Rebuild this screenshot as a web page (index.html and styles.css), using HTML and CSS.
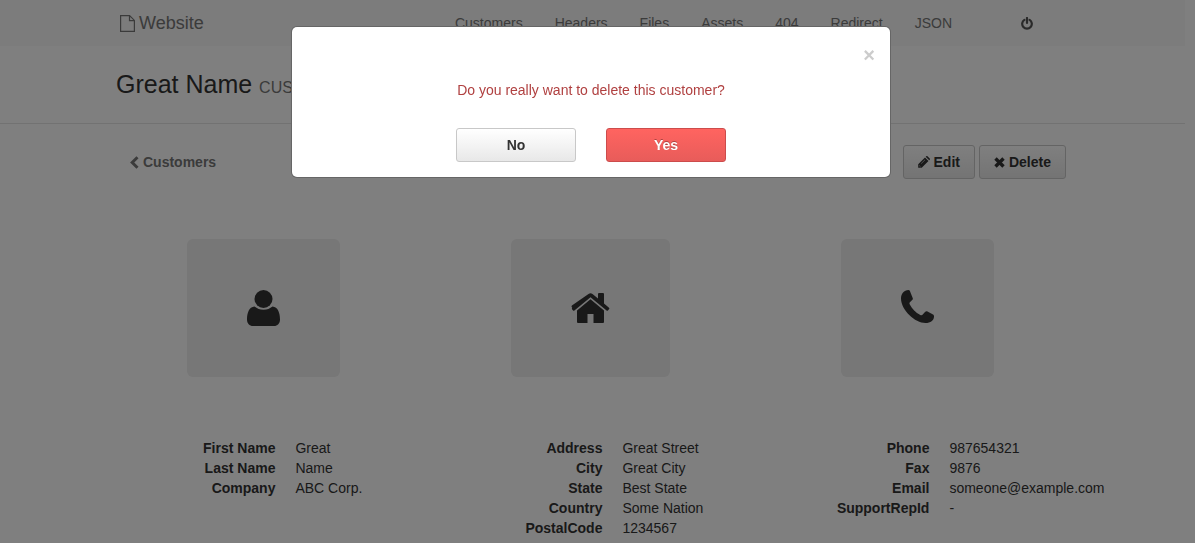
FILE: index.html
```html
<!DOCTYPE html>
<html lang="en">
<head>
<meta charset="utf-8">
<title>Great Name - Customer</title>
<link rel="stylesheet" href="styles.css">
</head>
<body>
<svg class="sprite" aria-hidden="true">
  <symbol id="file" viewBox="0 0 15 17"><path d="M.6.6h9l4.800 4.800v11H.6zM9.500.6v5h5" fill="none" stroke="currentColor" stroke-width="1.200"/></symbol>
  <symbol id="power" viewBox="0 0 12 13"><path d="M3.400 2.800a4.800 4.800 0 1 0 5.200 0" fill="none" stroke="currentColor" stroke-width="2.200" stroke-linecap="round"/><path d="M6 1v5" stroke="currentColor" stroke-width="2.200" stroke-linecap="round"/></symbol>
  <symbol id="chevron" viewBox="0 0 9 13"><path d="M7.500 1.200 2.200 6.500l5.300 5.300" fill="none" stroke="currentColor" stroke-width="3"/></symbol>
  <symbol id="pencil" viewBox="0 0 12 12"><path d="M7 1.500 10.500 5 3.700 11.800H.2V8.300zM7.700.8l.5-.5q.7-.6 1.300 0l2.200 2.200q.6.600 0 1.300l-.5.5z" fill="currentColor"/><path d="M1.200 9.500 2.500 10.800M3.200 7.600 7 3.800" stroke="#e8e8e8" stroke-width=".6"/></symbol>
  <symbol id="cross" viewBox="0 0 11 11"><path d="m1.500 1.500 8 8m0-8-8 8" stroke="currentColor" stroke-width="3.400"/></symbol>
  <symbol id="user" viewBox="0 0 33 36"><circle cx="16.500" cy="9" r="9" fill="currentColor"/><path d="M7.500 16.500C2 17 0 23 0 29.500 0 33.500 2.500 36 6 36h21c3.500 0 6-2.500 6-6.500 0-6.500-2-12.500-7.500-13-2.500 2-5.500 3.300-9 3.300s-6.500-1.300-9-3.300z" fill="currentColor"/></symbol>
  <symbol id="home" viewBox="0 0 39 36"><path d="M6 20.500 19.500 9.300 33 20.500V32q0 1-1 1h-9.500v-9h-6v9H7q-1 0-1-1z" fill="currentColor"/><path d="M1.200 17.800.7 17q-.5-.8.2-1.500L17.500 4q2-1.600 4 0l5.500 4.500V4q0-1 1-1h4q1 0 1 1v9.500l5 4.200q.7.600.2 1.200l-1.300 1.500q-.6.600-1.300.100L19.500 7.300 3.400 20.500q-.7.500-1.300-.1L.8 18.900z" fill="currentColor"/></symbol>
  <symbol id="phone" viewBox="0 0 33 36"><path d="M7.500 0C3 0 0 4 0 8.500 0 20 14 33 24.500 33c5 0 8.500-2.500 8.500-6.500 0-1-.3-1.500-1-1.900l-5.500-3c-1-.5-1.700-.3-2.500.5l-2.500 2.700c-.6.600-1.300.6-2.200.1-4.800-2.600-8-6-10.500-10.500-.5-.9-.5-1.500.1-2.100l2.300-2.200c.8-.8.9-1.400.4-2.400L8.900 1.100C8.600.4 8.200 0 7.500 0z" fill="currentColor"/></symbol>
</svg>
<div class="page">
  <header class="navbar">
    <a class="brand" href="#"><svg class="icon-file"><use href="#file"/></svg>Website</a>
    <nav class="menu">
      <a href="#">Customers</a><a href="#">Headers</a><a href="#">Files</a><a href="#">Assets</a><a href="#">404</a><a href="#">Redirect</a><a href="#">JSON</a>
    </nav>
    <a class="logout" href="#" aria-label="Log out"><svg class="icon-power"><use href="#power"/></svg></a>
  </header>
  <div class="heading"><h1>Great Name <small>CUSTOMER</small></h1></div>
  <main>
    <div class="toolbar">
      <a class="back" href="#"><svg class="icon-chevron"><use href="#chevron"/></svg>Customers</a>
      <div class="actions">
        <button class="btn" type="button"><svg class="icon-small"><use href="#pencil"/></svg>Edit</button>
        <button class="btn" type="button"><svg class="icon-small icon-cross"><use href="#cross"/></svg>Delete</button>
      </div>
    </div>
    <div class="details">
      <section>
        <div class="tile"><svg class="icon-large"><use href="#user"/></svg></div>
        <dl><dt>First Name</dt><dd>Great</dd><dt>Last Name</dt><dd>Name</dd><dt>Company</dt><dd>ABC Corp.</dd></dl>
      </section>
      <section>
        <div class="tile"><svg class="icon-large icon-wide"><use href="#home"/></svg></div>
        <dl><dt>Address</dt><dd>Great Street</dd><dt>City</dt><dd>Great City</dd><dt>State</dt><dd>Best State</dd><dt>Country</dt><dd>Some Nation</dd><dt>PostalCode</dt><dd>1234567</dd></dl>
      </section>
      <section>
        <div class="tile"><svg class="icon-large"><use href="#phone"/></svg></div>
        <dl><dt>Phone</dt><dd>987654321</dd><dt>Fax</dt><dd>9876</dd><dt>Email</dt><dd>someone@example.com</dd><dt>SupportRepId</dt><dd>-</dd></dl>
      </section>
    </div>
  </main>
</div>
<div class="overlay">
  <div class="modal" role="dialog" aria-modal="true" aria-labelledby="question">
    <button class="close" type="button" aria-label="Close">×</button>
    <p id="question">Do you really want to delete this customer?</p>
    <div class="choices">
      <button class="btn" type="button">No</button>
      <button class="btn danger" type="button">Yes</button>
    </div>
  </div>
</div>
</body>
</html>
```
FILE: styles.css
```css
* { box-sizing: border-box; }
body {
  margin: 0;
  background: #fff;
  color: #333;
  font: 14px/20px "Liberation Sans", Arial, sans-serif;
}
svg { display: block; flex: none; }
a { color: #777; text-decoration: none; }
.sprite { display: none; }
.page { margin-right: 10px; }
.navbar {
  display: flex;
  align-items: center;
  height: 46px;
  padding: 0 152px 0 120px;
  background: #f8f8f8;
}
.brand { display: flex; align-items: center; gap: 4px; font-size: 18px; }
.icon-file { width: 15px; height: 17px; }
.menu { display: flex; gap: 32px; margin-left: auto; }
.logout { margin-left: 69px; color: #555; }
.icon-power { width: 12px; height: 13px; }
.heading { padding: 22px 116px; border-bottom: 1px solid #e5e5e5; }
h1 { margin: 0; font-size: 25px; line-height: 33px; font-weight: normal; }
h1 small { font-size: 16px; line-height: 20px; color: #777; }
.toolbar {
  display: flex;
  justify-content: space-between;
  align-items: center;
  padding: 21px 119px 60px 130px;
}
.back { display: flex; align-items: center; gap: 4px; font-weight: bold; }
.icon-chevron { width: 9px; height: 13px; }
.actions { display: flex; gap: 4px; }
.btn {
  display: flex;
  align-items: center;
  justify-content: center;
  gap: 4px;
  height: 34px;
  padding: 0 14px;
  border: 1px solid #c8c8c8;
  border-radius: 3px;
  background: linear-gradient(#fff, #e8e8e8);
  color: #333;
  font: bold 14px/20px "Liberation Sans", Arial, sans-serif;
}
.icon-small { width: 12px; height: 12px; }
.icon-cross { width: 11px; height: 11px; }
.details {
  display: grid;
  grid-template-columns: repeat(3, minmax(0, 1fr));
  padding: 0 104px 0 100px;
}
.tile {
  width: fit-content;
  margin: 0 auto 61px;
  padding: 51px 60px;
  border-radius: 6px;
  background: #eee;
}
.icon-large { width: 33px; height: 36px; }
.icon-wide { width: 39px; }
dl {
  display: grid;
  grid-template-columns: minmax(0, 4fr) minmax(0, 3fr);
  column-gap: 20px;
  margin: 0;
  white-space: nowrap;
}
dt { font-weight: bold; text-align: right; }
dd { margin: 0; }
.overlay {
  position: fixed;
  inset: 0;
  display: flex;
  justify-content: center;
  align-items: flex-start;
  padding: 27px 13px 0 0;
  background: rgba(0, 0, 0, .5);
}
.modal {
  position: relative;
  width: 598px;
  max-width: 90%;
  padding: 53px 20px 15px;
  border-radius: 5px;
  background: #fff;
  box-shadow: 0 0 0 1px #666;
  color: #b04040;
  text-align: center;
}
.close {
  position: absolute;
  top: 18px;
  right: 11px;
  padding: 0 4px;
  border: 0;
  background: none;
  color: #ccc;
  font: bold 20px/20px "Liberation Sans", Arial, sans-serif;
}
.modal p { margin: 0 0 28px; }
.choices { display: flex; justify-content: center; gap: 30px; }
.choices .btn { width: 120px; }
.danger {
  border-color: #cc4c4c;
  background: linear-gradient(#ff6460, #e85c5a);
  color: #fff;
  text-shadow: 0 -1px 0 rgba(0, 0, 0, .3);
}
```
